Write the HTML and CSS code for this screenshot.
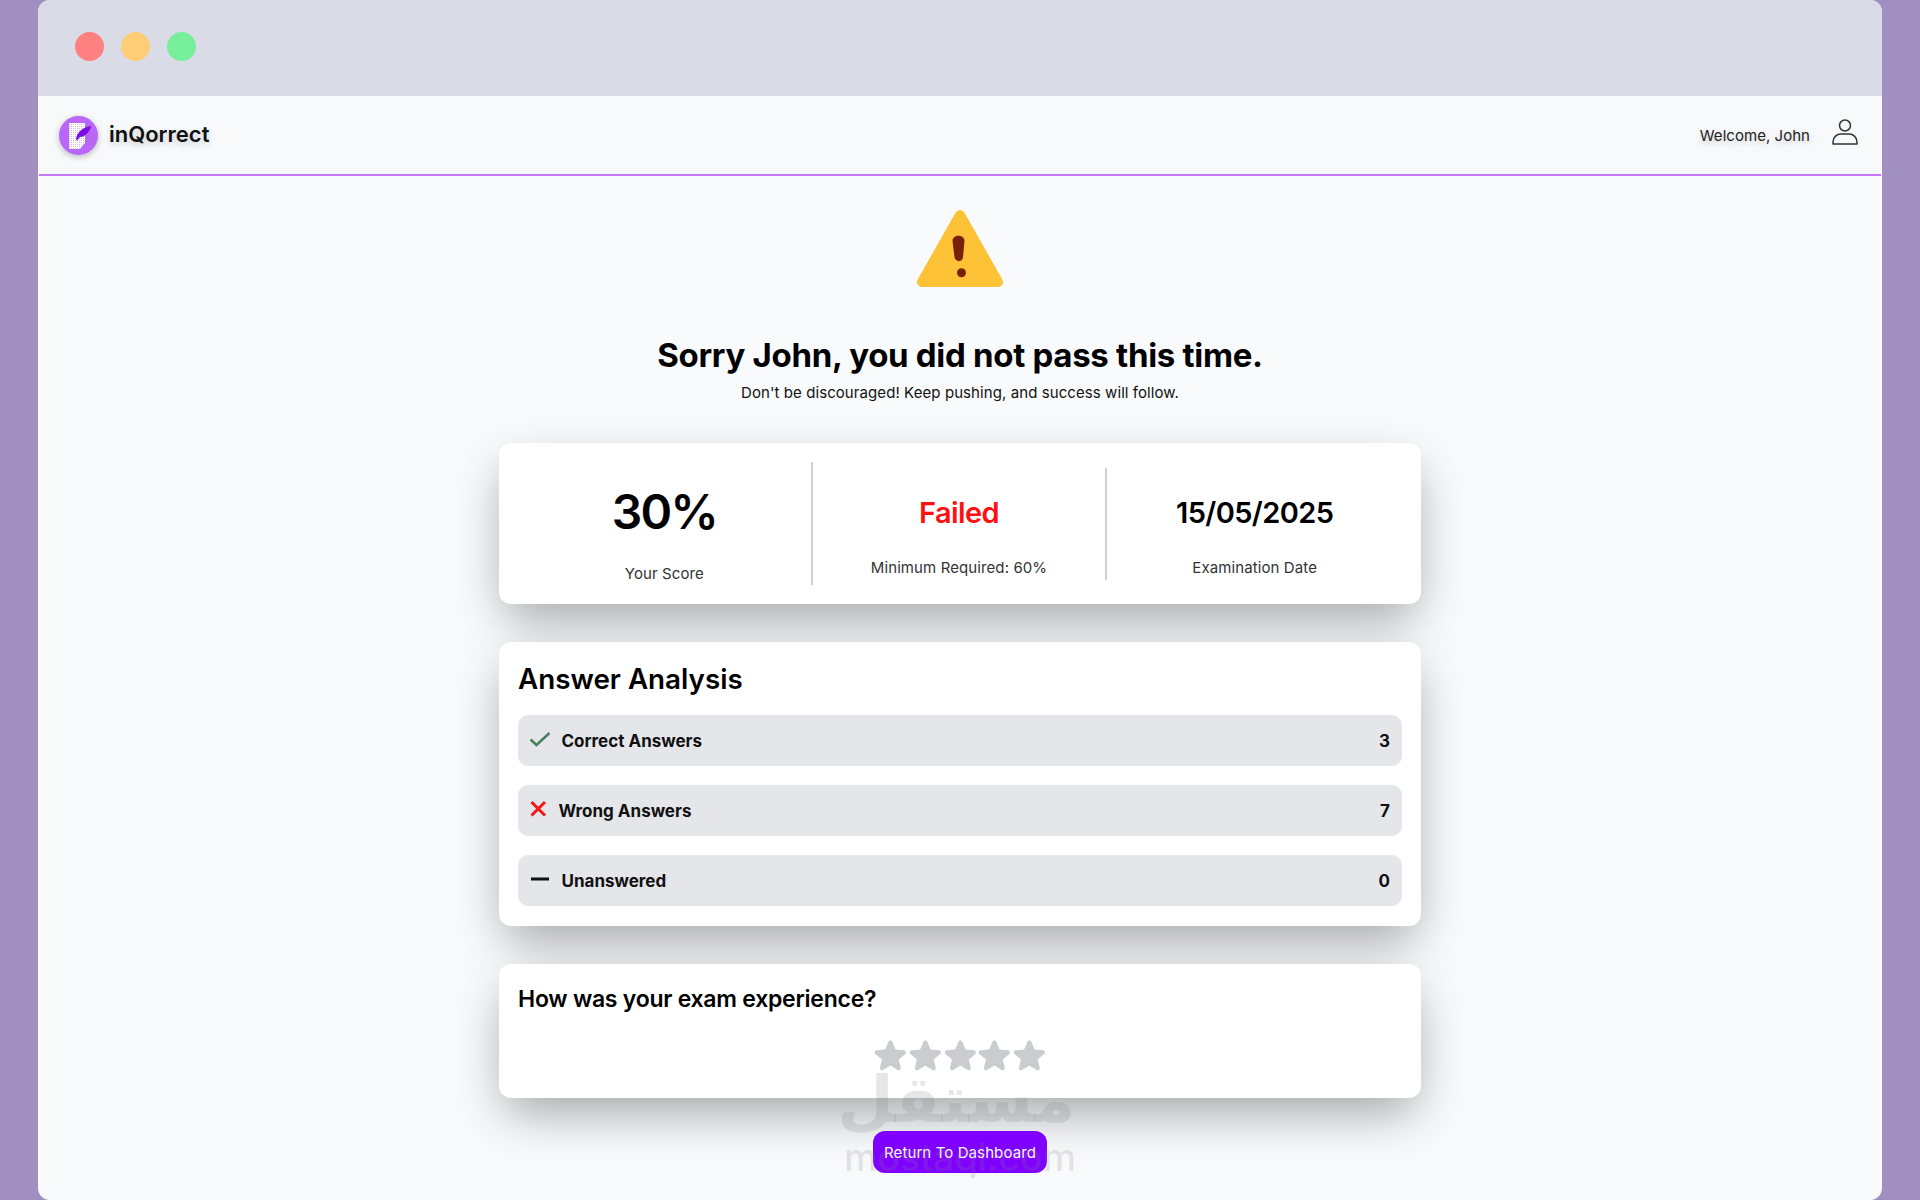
FILE: index.html
```html
<!DOCTYPE html>
<html lang="en">
<head>
<meta charset="UTF-8">
<title>inQorrect - Exam Result</title>
<link rel="stylesheet" href="styles.css">
</head>
<body>
<div class="window">
  <div class="titlebar">
    <span class="dot dot-red"></span>
    <span class="dot dot-yellow"></span>
    <span class="dot dot-green"></span>
  </div>

  <nav class="navbar">
    <div class="brand">
      <svg class="logo" viewBox="0 0 39 39">
        <defs>
          <pattern id="paper" width="2" height="2" patternUnits="userSpaceOnUse">
            <rect width="2" height="2" fill="#fff"/>
            <rect width="1" height="1" fill="#d9b4fb"/>
          </pattern>
        </defs>
        <circle cx="19.5" cy="19.5" r="19.5" fill="#b966f9"/>
        <path d="M10 7h16v20l-5 6H10z" fill="url(#paper)"/>
        <path d="M17 23c1-7 7-12 15-13-1 6-6 11-11 11l-3 3.500z" fill="#7a10e0"/>
      </svg>
      <span class="brand-name">inQorrect</span>
    </div>
    <div class="nav-user">
      <span class="welcome">Welcome, John</span>
      <svg class="user-icon" viewBox="0 0 26 26" fill="none" stroke="#333" stroke-width="1.500">
        <circle cx="13" cy="6.500" r="5.500"/>
        <path d="M1 25v-2c0-5 4-8 8-8h8c4 0 8 3 8 8v2z" stroke-linejoin="round"/>
      </svg>
    </div>
  </nav>

  <main class="content">
    <svg class="warning" viewBox="0 0 96 96">
      <path d="M48 15L10 82H86z" fill="#fec236" stroke="#fec236" stroke-width="10" stroke-linejoin="round"/>
      <path d="M40.500 41c0-7 12-7 12 0l-1.500 16c0 5.500-8 5.500-8.500 0z" fill="#7a2008"/>
      <circle cx="49.500" cy="72.700" r="4.500" fill="#7a2008"/>
    </svg>
    <h1 class="title">Sorry John, you did not pass this time.</h1>
    <p class="subtitle">Don't be discouraged! Keep pushing, and success will follow.</p>

    <section class="card stats">
      <div class="stat stat-score">
        <div class="score">30%</div>
        <div class="stat-label">Your Score</div>
      </div>
      <div class="stat">
        <div class="stat-value failed">Failed</div>
        <div class="stat-label">Minimum Required: 60%</div>
      </div>
      <div class="stat stat-last">
        <div class="stat-value">15/05/2025</div>
        <div class="stat-label">Examination Date</div>
      </div>
    </section>

    <section class="card analysis">
      <h2 class="analysis-title">Answer Analysis</h2>
      <div class="row">
        <svg class="row-icon" width="20" height="20" viewBox="0 0 20 20" fill="none" stroke="#45805c" stroke-width="2.600">
          <path d="M0.500 10.500L6.500 16 19.500 4"/>
        </svg>
        <span class="row-label">Correct Answers</span>
        <span class="row-count">3</span>
      </div>
      <div class="row">
        <svg class="row-icon" width="17" height="20" viewBox="0 0 17 20" fill="none" stroke="#f5151a" stroke-width="3">
          <path d="M1.500 3L15 16.500M15 3L1.500 16.500"/>
        </svg>
        <span class="row-label">Wrong Answers</span>
        <span class="row-count">7</span>
      </div>
      <div class="row">
        <svg class="row-icon" width="20" height="20" viewBox="0 0 20 20" fill="none" stroke="#111" stroke-width="3">
          <path d="M1 10H19"/>
        </svg>
        <span class="row-label">Unanswered</span>
        <span class="row-count">0</span>
      </div>
    </section>

    <section class="card feedback">
      <h3 class="feedback-title">How was your exam experience?</h3>
      <div class="stars">
        <svg class="star" viewBox="1 1.500 22 22"><path d="M10.788 3.210c.448-1.077 1.976-1.077 2.424 0l2.082 5.006 5.404.434c1.164.093 1.636 1.545.749 2.305l-4.117 3.527 1.257 5.273c.271 1.136-.964 2.033-1.960 1.425L12 18.354 7.373 21.180c-.996.608-2.231-.290-1.960-1.425l1.257-5.273-4.117-3.527c-.887-.760-.415-2.212.749-2.305l5.404-.434 2.082-5.005z"/></svg>
        <svg class="star" viewBox="1 1.500 22 22"><path d="M10.788 3.210c.448-1.077 1.976-1.077 2.424 0l2.082 5.006 5.404.434c1.164.093 1.636 1.545.749 2.305l-4.117 3.527 1.257 5.273c.271 1.136-.964 2.033-1.960 1.425L12 18.354 7.373 21.180c-.996.608-2.231-.290-1.960-1.425l1.257-5.273-4.117-3.527c-.887-.760-.415-2.212.749-2.305l5.404-.434 2.082-5.005z"/></svg>
        <svg class="star" viewBox="1 1.500 22 22"><path d="M10.788 3.210c.448-1.077 1.976-1.077 2.424 0l2.082 5.006 5.404.434c1.164.093 1.636 1.545.749 2.305l-4.117 3.527 1.257 5.273c.271 1.136-.964 2.033-1.960 1.425L12 18.354 7.373 21.180c-.996.608-2.231-.290-1.960-1.425l1.257-5.273-4.117-3.527c-.887-.760-.415-2.212.749-2.305l5.404-.434 2.082-5.005z"/></svg>
        <svg class="star" viewBox="1 1.500 22 22"><path d="M10.788 3.210c.448-1.077 1.976-1.077 2.424 0l2.082 5.006 5.404.434c1.164.093 1.636 1.545.749 2.305l-4.117 3.527 1.257 5.273c.271 1.136-.964 2.033-1.960 1.425L12 18.354 7.373 21.180c-.996.608-2.231-.290-1.960-1.425l1.257-5.273-4.117-3.527c-.887-.760-.415-2.212.749-2.305l5.404-.434 2.082-5.005z"/></svg>
        <svg class="star" viewBox="1 1.500 22 22"><path d="M10.788 3.210c.448-1.077 1.976-1.077 2.424 0l2.082 5.006 5.404.434c1.164.093 1.636 1.545.749 2.305l-4.117 3.527 1.257 5.273c.271 1.136-.964 2.033-1.960 1.425L12 18.354 7.373 21.180c-.996.608-2.231-.290-1.960-1.425l1.257-5.273-4.117-3.527c-.887-.760-.415-2.212.749-2.305l5.404-.434 2.082-5.005z"/></svg>
      </div>
    </section>

    <button class="return-btn">Return To Dashboard</button>
  </main>

  <div class="watermark">
    <div class="wm-arabic" lang="ar" dir="rtl">مستقل</div>
    <div class="wm-latin">mostaql.com</div>
  </div>
</div>
</body>
</html>
```

FILE: styles.css
```css
body {
  margin: 0;
  padding: 0 38px;
  height: 1200px;
  overflow: hidden;
  background: #a08fc0;
  font-family: 'Inter', 'Liberation Sans', sans-serif;
  color: #000;
}
.window {
  position: relative;
  height: 1200px;
  background: #f9fafc;
  border-radius: 12px;
  overflow: hidden;
}
.titlebar {
  display: flex;
  align-items: center;
  gap: 17px;
  height: 96px;
  padding: 0 36.500px 3px;
  box-sizing: border-box;
  background: #d9dbe6;
}
.dot {
  width: 29px;
  height: 29px;
  border-radius: 50%;
}
.dot-red { background: #ff8080; }
.dot-yellow { background: #ffcc77; }
.dot-green { background: #77ee99; }
.navbar {
  display: flex;
  justify-content: space-between;
  align-items: center;
  height: 80px;
  margin: 0 1px;
  padding: 0 23px 0 20px;
  box-sizing: border-box;
  background: #f8f9fb;
  border-bottom: 2px solid #c678fb;
}
.brand {
  display: flex;
  align-items: center;
  gap: 11px;
}
.logo {
  width: 39px;
  height: 39px;
  filter: drop-shadow(0 2px 3px rgba(0, 0, 0, 0.25));
}
.brand-name {
  font-size: 22px;
  font-weight: 600;
  color: #111;
  margin-top: -2px;
  text-shadow: 0 3px 6px rgba(0, 0, 0, 0.18);
}
.nav-user {
  display: flex;
  align-items: center;
  gap: 22px;
}
.welcome {
  font-size: 15px;
  color: #222;
  letter-spacing: 0.04px;
  text-shadow: 0 3px 6px rgba(0, 0, 0, 0.18);
}
.user-icon {
  width: 26px;
  height: 26px;
  margin-top: -6px;
}
.content {
  display: flex;
  flex-direction: column;
  align-items: center;
  padding-top: 24px;
}
.warning {
  display: block;
  width: 96px;
  height: 96px;
}
.title {
  margin: 39px 0 0;
  font-size: 33px;
  line-height: 40px;
  font-weight: 700;
  letter-spacing: -0.3px;
}
.subtitle {
  margin: 7px 0 0;
  font-size: 15px;
  line-height: 22px;
  letter-spacing: 0.08px;
  color: #111;
}
.card {
  width: 922px;
  box-sizing: border-box;
  background: #fff;
  border-radius: 12px;
  box-shadow: 0 20px 50px -6px rgba(0, 0, 0, 0.35);
}
.stats {
  display: grid;
  grid-template-columns: repeat(3, 1fr);
  align-items: center;
  height: 161px;
  margin-top: 39px;
  padding: 19px;
}
.stat {
  display: flex;
  flex-direction: column;
  align-items: center;
  justify-content: space-between;
  height: 112px;
  box-sizing: border-box;
  padding: 27px 0 1px;
  border-right: 2px solid #d1d1d4;
}
.stat-score {
  height: 123px;
  padding: 22px 0 0;
}
.stat-last {
  border-right: 0;
}
.score {
  font-size: 48px;
  line-height: 56px;
  font-weight: 600;
  letter-spacing: -1.8px;
}
.stat-value {
  font-size: 29px;
  line-height: 36px;
  font-weight: 600;
  letter-spacing: -0.6px;
}
.failed {
  color: #ff0f13;
}
.stat-label {
  font-size: 15px;
  line-height: 22px;
  letter-spacing: 0.1px;
  color: #333;
}
.analysis {
  height: 284px;
  margin-top: 38px;
  padding: 19px 19px 0;
}
.analysis-title {
  margin: 0 0 18px;
  font-size: 27.800px;
  line-height: 36px;
  font-weight: 600;
}
.row {
  display: flex;
  align-items: center;
  height: 51px;
  margin-bottom: 19px;
  padding: 0 12px;
  background: #e5e6ea;
  border-radius: 10px;
}
.row-icon {
  margin: -4px 11.500px 0 0;
  flex: none;
}
.row-label {
  font-size: 17px;
  font-weight: 700;
  color: #111;
}
.row-count {
  margin-left: auto;
  font-size: 17px;
  font-weight: 700;
  color: #111;
}
.feedback {
  height: 134px;
  margin-top: 38px;
  padding: 19px;
}
.feedback-title {
  margin: 0;
  font-size: 23px;
  line-height: 32px;
  font-weight: 600;
  letter-spacing: -0.25px;
}
.stars {
  display: flex;
  justify-content: center;
  margin-top: 24px;
}
.star {
  width: 34.700px;
  height: 34.700px;
  fill: #cbcccf;
}
.return-btn {
  width: 174px;
  height: 42px;
  margin-top: 33px;
  border: 0;
  border-radius: 12px;
  background: #8000ff;
  color: #fff;
  font-family: inherit;
  font-size: 15px;
  letter-spacing: 0.1px;
}
.watermark {
  position: absolute;
  left: 807px;
  top: 1062px;
  width: 230px;
  text-align: center;
  color: rgba(130, 130, 135, 0.2);
  pointer-events: none;
}
.wm-arabic {
  font-family: 'DejaVu Sans', sans-serif;
  font-size: 65px;
  line-height: 76px;
  font-weight: 700;
  padding-left: 4px;
}
.wm-latin {
  font-family: 'Inter', sans-serif;
  font-size: 37.500px;
  line-height: 40px;
  font-weight: 500;
  margin-left: -1px;
}
```
